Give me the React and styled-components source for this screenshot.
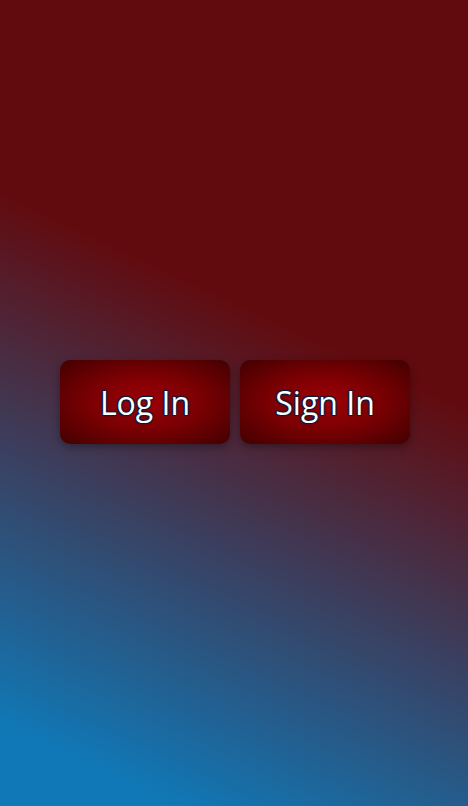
import styled, { createGlobalStyle } from "styled-components";

const GlobalStyle = createGlobalStyle`
  html, body {
    margin: 0;
    padding: 0;
    height: 100%;
  }
  body {
    font-family: "Open Sans", "DejaVu Sans", sans-serif;
  }
`;

const Page = styled.main`
  box-sizing: border-box;
  min-height: 100vh;
  padding: 0 0 2px 2px;
  display: flex;
  align-items: center;
  justify-content: center;
  background: linear-gradient(25deg, #1078b6 8%, #620b0f 60%);
`;

const Row = styled.div`
  display: flex;
  gap: 10px;
`;

const Button = styled.button`
  width: 170px;
  height: 84px;
  border: none;
  border-radius: 10px;
  background: radial-gradient(ellipse at center, #a00006 0%, #7c0003 45%, #420001 100%);
  box-shadow: 0 3px 8px rgba(0, 0, 0, 0.35);
  color: #fff;
  font-family: "Open Sans", "DejaVu Sans", sans-serif;
  font-size: 32px;
  cursor: pointer;
  text-shadow: 1px 1px 1px #0b1b3a, -1px -1px 1px #0b1b3a, 1px -1px 1px #0b1b3a,
    -1px 1px 1px #0b1b3a;
`;

export default function App() {
  return (
    <>
      <GlobalStyle />
      <Page>
        <Row>
          <Button>Log In</Button>
          <Button>Sign In</Button>
        </Row>
      </Page>
    </>
  );
}
